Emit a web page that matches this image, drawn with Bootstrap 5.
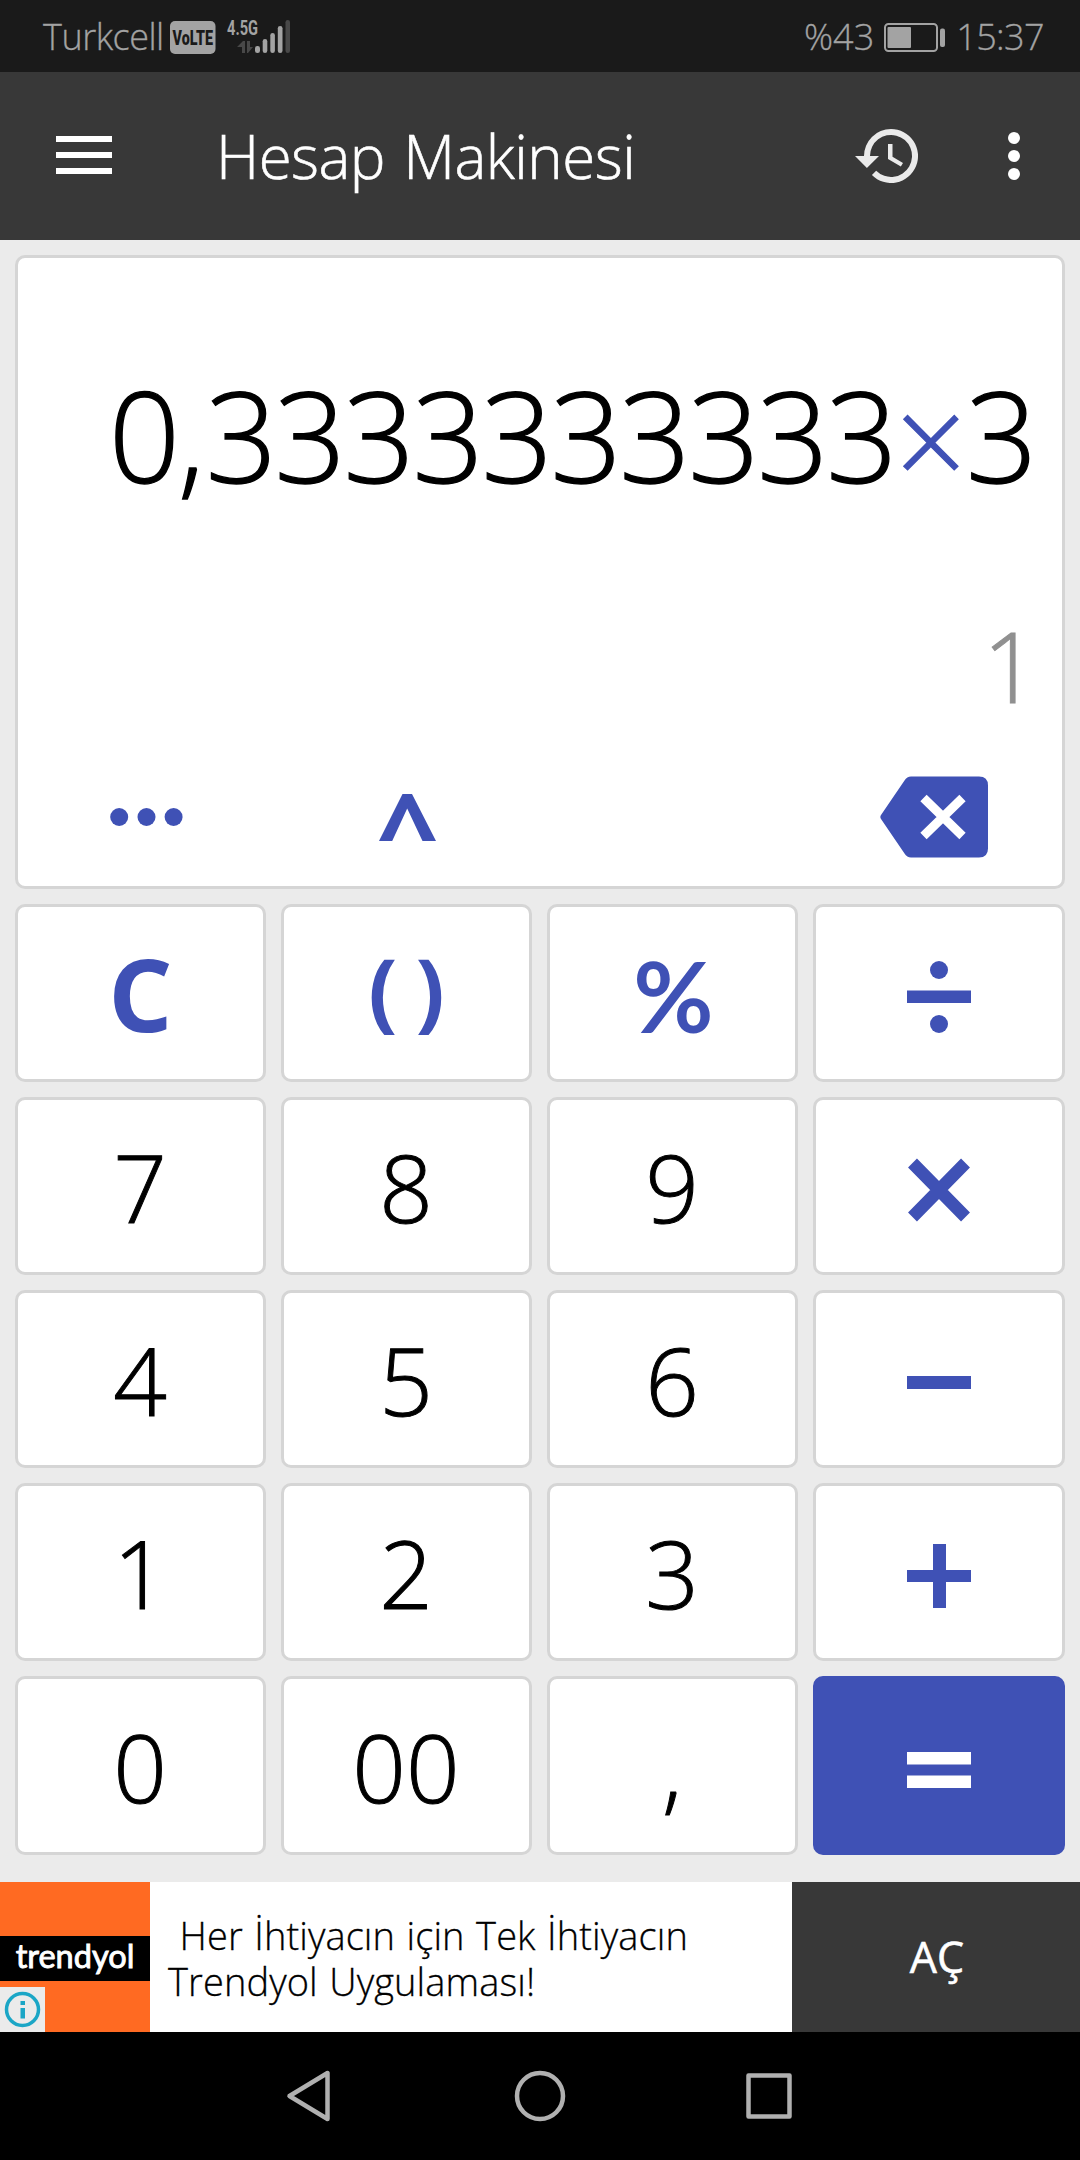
<!DOCTYPE html>
<html lang="tr">
<head>
<meta charset="utf-8">
<meta name="viewport" content="width=device-width, initial-scale=1">
<title>Hesap Makinesi</title>
<link href="https://cdn.jsdelivr.net/npm/bootstrap@5.3.0/dist/css/bootstrap.min.css" rel="stylesheet">
<style>
  :root { --accent: #3f51b5; --edge: #d5d5d5; }
  body { font-family: "Open Sans", "Noto Sans", sans-serif; font-weight: 300; background: #ebebeb; height: 2160px; overflow: hidden; color: #000; }
  svg { display: block; flex: none; }
  .status-bar { height: 72px; background: #1a1a1a; color: #a3a3a3; font-size: 36px; line-height: 72px; padding: 1px 36px 0 43px; -webkit-text-stroke: .3px; }
  .status-bar svg { -webkit-text-stroke: 0; }
  .carrier { letter-spacing: -.5px; width: 127px; white-space: nowrap; }
  .clock { letter-spacing: -.6px; }
  .app-bar { height: 168px; background: #383838; color: #fff; padding: 0 56px; }
  .menu-icon { margin-top: -2px; }
  .more-icon { margin: 0 4px 0 84px; }
  .app-title { font-size: 60px; line-height: 168px; letter-spacing: -.5px; word-spacing: 3px; margin-left: 104px; white-space: nowrap; -webkit-text-stroke: .6px; }
  .calc { padding: 15px; gap: 15px; }
  .screen { height: 634px; border: 3px solid var(--edge); border-radius: 10px; padding-top: 92px; }
  .expr { font-size: 125px; line-height: 170px; letter-spacing: -2.4px; padding-right: 27px; white-space: nowrap; -webkit-text-stroke: 1.300px; }
  .expr-comma { letter-spacing: 1px; }
  .expr-op { line-height: 1; vertical-align: -4px; letter-spacing: -.5px; }
  .result { font-size: 97px; line-height: 120px; margin-top: 85px; padding-right: 24px; color: #909090; -webkit-text-stroke: 1px; }
  .tools { height: 90px; margin-top: 47px; }
  .accent { color: var(--accent); }
  .keys { display: grid; grid-template-columns: 251px 251px 251px 252px; grid-template-rows: repeat(4, 178px) 179px; gap: 15px; }
  .key { background: #fff; border: 3px solid var(--edge); border-radius: 10px; padding: 2px 1px 0 0; font-size: 94px; line-height: 1; font-weight: 300; color: #000; display: flex; align-items: center; justify-content: center; font-family: inherit; -webkit-text-stroke: 1px; }
  .key-op { color: var(--accent); font-weight: 700; -webkit-text-stroke: 0; }
  .key-op svg { margin-top: 5px; }
  .key-clear { font-size: 101px; padding: 0; }
  .key-paren { font-size: 86px; padding: 0 0 11px; gap: 18px; }
  .key-pct { font-family: Lato, sans-serif; font-size: 98px; padding: 3px 0 0 2px; }
  .key-eq { background: var(--accent); border-color: var(--accent); color: #fff; padding-top: 4px; }
  .ad { height: 150px; margin-top: 12px; background: #fff; }
  .ad-logo { width: 150px; background: #ff6a22; padding-top: 54px; }
  .ad-name { height: 45px; background: #000; color: #fff; font: 400 32.500px/40px Lato, sans-serif; -webkit-text-stroke: .9px; }
  .ad-info { width: 45px; height: 45px; margin-top: 6px; background: #ebebeb; }
  .ad-copy { width: 642px; padding: 30px 0 0 18px; font-size: 38px; line-height: 46px; white-space: pre; word-spacing: 1.500px; letter-spacing: .1px; -webkit-text-stroke: .3px; }
  .ad-cta { background: #383838; color: #fff; font-size: 43px; font-weight: 400; border: 0; padding: 0 0 0 2px; -webkit-text-stroke: .6px; }
  .nav-bar { height: 128px; background: #000; }
</style>
<script src="https://cdn.jsdelivr.net/npm/bootstrap@5.3.0/dist/js/bootstrap.bundle.min.js"></script>
</head>
<body class="d-flex flex-column m-0">
  <div class="status-bar d-flex align-items-center">
    <span class="carrier">Turkcell</span>
    <svg width="123" height="40" viewBox="170 16 123 40">
      <rect x="170" y="20" width="45.500" height="33" rx="5" fill="#a3a3a3"/>
      <text x="172.500" y="43.500" font-family="Roboto, sans-serif" font-weight="900" font-size="20.500" textLength="40.500" lengthAdjust="spacingAndGlyphs" fill="#1a1a1a">VoLTE</text>
      <text x="227" y="34" font-family="Roboto, sans-serif" font-weight="700" font-size="21" textLength="31" lengthAdjust="spacingAndGlyphs" fill="#a3a3a3">4.5G</text>
      <g fill="#a3a3a3"><rect x="255" y="45" width="5" height="7" rx="2.300"/><rect x="262.700" y="38" width="4.600" height="14" rx="2.300"/><rect x="270.300" y="32" width="4.600" height="20" rx="2.300"/><rect x="277.800" y="25" width="4.700" height="27" rx="2.300"/></g>
      <g fill="#484848"><rect x="285.500" y="19" width="4.500" height="33" rx="2.300"/><path d="M237 46l6-6h2v12h-3v-6zM247 40h3v6h3l-5 6h-1z"/></g>
    </svg>
    <span class="ms-auto">%43</span>
    <svg class="ms-2 me-2" width="66" height="36" viewBox="883 18 66 36">
      <rect x="886" y="23" width="52" height="27" rx="3.500" fill="none" stroke="#a3a3a3" stroke-width="2"/>
      <rect x="888.500" y="26" width="23.500" height="21" rx="1" fill="#a3a3a3"/><rect x="941" y="27.500" width="5" height="18.500" rx="2" fill="#a3a3a3"/>
    </svg>
    <span class="clock">15:37</span>
  </div>
  <header class="app-bar d-flex align-items-center">
    <svg class="menu-icon" width="56" height="38" viewBox="0 0 56 38" fill="#fff"><path d="M0 0h56v6H0zM0 16h56v6H0zM0 32h56v6H0z"/></svg>
    <span class="app-title">Hesap Makinesi</span>
    <svg class="ms-auto" width="72" height="72" viewBox="0 0 24 24" fill="#eaeaea"><path d="M13 3a9 9 0 0 0-9 9H1l3.890 3.890.07.14L9 12H6a7 7 0 1 1 2.060 4.940l-1.420 1.420A9 9 0 1 0 13 3zm-1 5v5l4.280 2.540.720-1.210-3.500-2.080V8z"/></svg>
    <svg class="more-icon" width="12" height="48" viewBox="0 0 12 48" fill="#fff"><circle cx="6" cy="6" r="6"/><circle cx="6" cy="24" r="6"/><circle cx="6" cy="42" r="6"/></svg>
  </header>
  <main class="calc d-flex flex-column">
    <section class="screen bg-white">
      <div class="expr text-end">0<span class="expr-comma">,</span>3333333333<span class="accent expr-op">×</span>3</div>
      <div class="result text-end">1</div>
      <div class="tools row g-0 align-items-center accent">
        <div class="col-3 d-flex justify-content-center pe-1"><svg width="73" height="18" viewBox="0 0 73 18" fill="currentColor"><circle cx="9.200" cy="9" r="9"/><circle cx="36.500" cy="9" r="9"/><circle cx="63.600" cy="9" r="9"/></svg></div>
        <div class="col-3 d-flex justify-content-center pe-1"><svg width="57" height="48" viewBox="0 0 57 48" fill="currentColor" aria-label="^"><path d="M23.500 1H33L57 48H43.500L28.200 15.500L13.200 48H0z"/></svg></div>
        <div class="col-3"></div>
        <div class="col-3 d-flex justify-content-center ps-1"><svg width="108" height="82" viewBox="0 0 108 82"><path fill="currentColor" d="M31 .5H99Q108 .5 108 9.500V72.500Q108 81.500 99 81.500H31Q27 81.500 24.500 77.500L1 43Q-.3 41 1 39L24.500 4.500Q27 .5 31 .5Z"/><path d="M43.500 22L82.500 60M82.500 22L43.500 60" stroke="#fff" stroke-width="9"/></svg></div>
      </div>
    </section>
    <section class="keys">
      <button class="key key-op key-clear">C</button>
      <button class="key key-op key-paren"><span>(</span><span>)</span></button>
      <button class="key key-op key-pct">%</button>
      <button class="key key-op" aria-label="÷"><svg width="64" height="74" viewBox="0 0 64 74" fill="currentColor"><circle cx="32" cy="10" r="9"/><rect y="30.500" width="64" height="12.500"/><circle cx="32" cy="64" r="9"/></svg></button>
      <button class="key">7</button><button class="key">8</button><button class="key">9</button>
      <button class="key key-op" aria-label="×"><svg width="64" height="64" viewBox="0 0 64 64" fill="none" stroke="currentColor" stroke-width="12.500"><path d="M5.500 5L58.500 59M58.500 5L5.500 59"/></svg></button>
      <button class="key">4</button><button class="key">5</button><button class="key">6</button>
      <button class="key key-op" aria-label="−"><svg width="64" height="13" fill="currentColor"><rect width="64" height="13"/></svg></button>
      <button class="key">1</button><button class="key">2</button><button class="key">3</button>
      <button class="key key-op" aria-label="+"><svg width="64" height="64" fill="currentColor"><path d="M0 26h26V0h13v26h25v12H39v26H26V38H0z"/></svg></button>
      <button class="key">0</button><button class="key">00</button><button class="key">,</button>
      <button class="key key-op key-eq" aria-label="="><svg width="64" height="36" fill="currentColor"><path d="M0 0h64v12.500H0zM0 23.500h64V36H0z"/></svg></button>
    </section>
  </main>
  <section class="ad d-flex">
    <div class="ad-logo">
      <div class="ad-name text-center">trendyol</div>
      <div class="ad-info"><svg width="45" height="45" viewBox="0 0 45 45"><circle cx="22.500" cy="22.500" r="16" fill="none" stroke="#1ba6c6" stroke-width="3.500"/><path fill="#1ba6c6" d="M20.500 14h4.500v4h-4.500zM20.500 21h4.500v10.500h-4.500z"/></svg></div>
    </div>
    <div class="ad-copy"> Her İhtiyacın için Tek İhtiyacın
Trendyol Uygulaması!</div>
    <button class="ad-cta flex-grow-1">AÇ</button>
  </section>
  <nav class="nav-bar d-flex justify-content-center align-items-center">
    <svg width="520" height="60" viewBox="280 2066 520 60" fill="none" stroke="#b0b0b0" stroke-width="4.500" stroke-linejoin="round"><path d="M289.500 2096L327.500 2073V2119Z"/><circle cx="540" cy="2096" r="23"/><rect x="748.500" y="2075.500" width="41" height="41"/></svg>
  </nav>
</body>
</html>
